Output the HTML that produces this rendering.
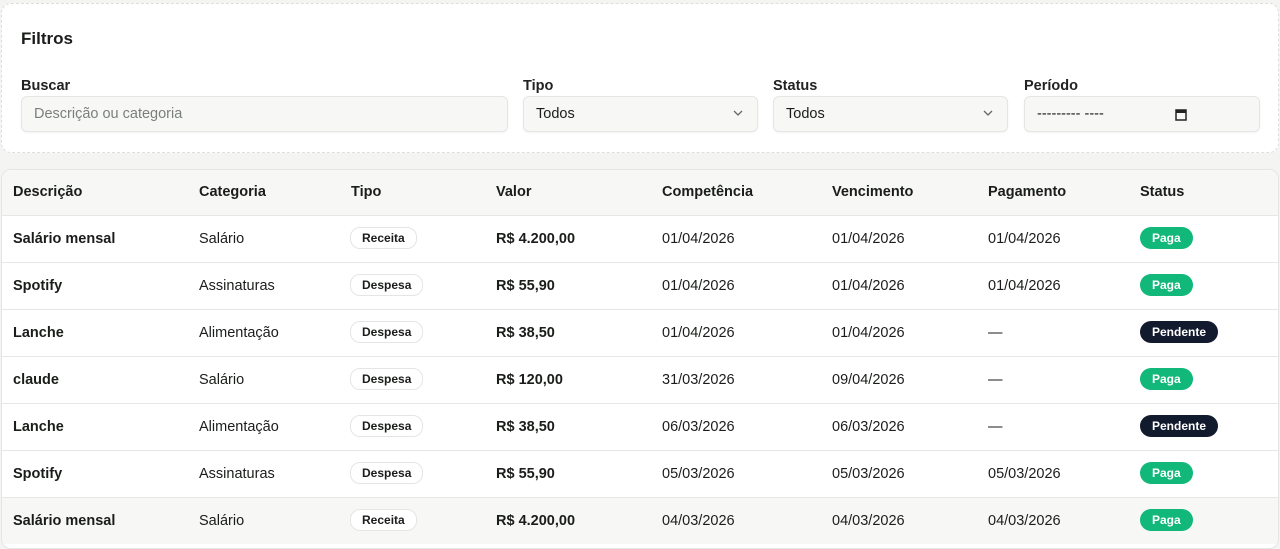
<!DOCTYPE html>
<html><head><meta charset="utf-8"><style>
*{box-sizing:border-box;margin:0;padding:0}
body{width:1280px;height:544px;background:#f4f5f3;font-family:"Liberation Sans",sans-serif;color:#1a1d1a;position:relative;overflow:hidden}
.card{position:absolute;left:1px;top:3px;width:1278px;height:150px;background:#fff;border:1px dashed #dcdfdb;border-radius:10px}
h2{position:absolute;left:19px;top:25px;font-size:17px;font-weight:bold}
.lbl{position:absolute;top:74px;font-size:14.5px;font-weight:bold;color:#222}
.inp{position:absolute;top:92px;height:36px;background:#f7f8f6;border:1px solid #e3e6e2;border-radius:6px;font-size:14.5px;padding:9px 12px;box-shadow:0 1px 2px rgba(0,0,0,.05)}
.inp svg{position:absolute;right:14px;top:13px}
.tbl{position:absolute;left:1px;top:169px;width:1278px;height:380px;background:#fff;border:1px solid #e3e6e2;border-radius:10px;overflow:hidden}
.row{position:absolute;left:0;width:100%;height:47px;border-top:1px solid #e6e8e5;font-size:14.5px}
.row span{position:absolute;top:15px}
.hd{top:0;height:45px;background:#f7f8f6;border-top:none;font-weight:bold}
.hd span{top:14px}
.b{font-weight:bold}
.pill{font-size:12px;font-weight:bold;border:1px solid #e3e6e2;border-radius:10px;padding:3px 11px;top:11px!important}
.st{font-size:12px;font-weight:bold;color:#fff;border-radius:11px;padding:4px 12px;top:11px!important}
.pg{background:#12b87a}.pd{background:#121a2e}
</style></head><body>
<div class="card">
<h2>Filtros</h2>
<div class="lbl" style="left:19px">Buscar</div>
<div class="inp" style="left:19px;width:487px;color:#7b7f7a">Descrição ou categoria</div>
<div class="lbl" style="left:521px">Tipo</div>
<div class="inp" style="left:521px;width:235px">Todos<svg width="10" height="6" viewBox="0 0 10 6"><path d="M1 1l4 4 4-4" fill="none" stroke="#666" stroke-width="1.3"/></svg></div>
<div class="lbl" style="left:771px">Status</div>
<div class="inp" style="left:771px;width:235px">Todos<svg width="10" height="6" viewBox="0 0 10 6"><path d="M1 1l4 4 4-4" fill="none" stroke="#666" stroke-width="1.3"/></svg></div>
<div class="lbl" style="left:1022px">Período</div>
<div class="inp" style="left:1022px;width:236px">--------- ----<svg style="right:72px;top:11px" width="12" height="13" viewBox="0 0 12 13"><rect x="1" y="2" width="10" height="10" fill="none" stroke="#222" stroke-width="1.5"/><rect x="1" y="2" width="10" height="3" fill="#222"/></svg></div>
</div>
<div class="tbl">
<div class="row hd"><span style="left:11px">Descrição</span><span style="left:197px">Categoria</span><span style="left:349px">Tipo</span><span style="left:494px">Valor</span><span style="left:660px">Competência</span><span style="left:830px">Vencimento</span><span style="left:986px">Pagamento</span><span style="left:1138px">Status</span></div>

<div class="row" style="top:45px"><span class="b" style="left:11px">Salário mensal</span><span style="left:197px">Salário</span><span class="pill" style="left:348px">Receita</span><span class="b" style="left:494px">R$ 4.200,00</span><span style="left:660px">01/04/2026</span><span style="left:830px">01/04/2026</span><span style="left:986px">01/04/2026</span><span class="st pg" style="left:1138px">Paga</span></div>
<div class="row" style="top:92px"><span class="b" style="left:11px">Spotify</span><span style="left:197px">Assinaturas</span><span class="pill" style="left:348px">Despesa</span><span class="b" style="left:494px">R$ 55,90</span><span style="left:660px">01/04/2026</span><span style="left:830px">01/04/2026</span><span style="left:986px">01/04/2026</span><span class="st pg" style="left:1138px">Paga</span></div>
<div class="row" style="top:139px"><span class="b" style="left:11px">Lanche</span><span style="left:197px">Alimentação</span><span class="pill" style="left:348px">Despesa</span><span class="b" style="left:494px">R$ 38,50</span><span style="left:660px">01/04/2026</span><span style="left:830px">01/04/2026</span><span style="left:986px">—</span><span class="st pd" style="left:1138px">Pendente</span></div>
<div class="row" style="top:186px"><span class="b" style="left:11px">claude</span><span style="left:197px">Salário</span><span class="pill" style="left:348px">Despesa</span><span class="b" style="left:494px">R$ 120,00</span><span style="left:660px">31/03/2026</span><span style="left:830px">09/04/2026</span><span style="left:986px">—</span><span class="st pg" style="left:1138px">Paga</span></div>
<div class="row" style="top:233px"><span class="b" style="left:11px">Lanche</span><span style="left:197px">Alimentação</span><span class="pill" style="left:348px">Despesa</span><span class="b" style="left:494px">R$ 38,50</span><span style="left:660px">06/03/2026</span><span style="left:830px">06/03/2026</span><span style="left:986px">—</span><span class="st pd" style="left:1138px">Pendente</span></div>
<div class="row" style="top:280px"><span class="b" style="left:11px">Spotify</span><span style="left:197px">Assinaturas</span><span class="pill" style="left:348px">Despesa</span><span class="b" style="left:494px">R$ 55,90</span><span style="left:660px">05/03/2026</span><span style="left:830px">05/03/2026</span><span style="left:986px">05/03/2026</span><span class="st pg" style="left:1138px">Paga</span></div>
<div class="row" style="top:327px;background:#f7f8f6"><span class="b" style="left:11px">Salário mensal</span><span style="left:197px">Salário</span><span class="pill" style="left:348px;background:#fff">Receita</span><span class="b" style="left:494px">R$ 4.200,00</span><span style="left:660px">04/03/2026</span><span style="left:830px">04/03/2026</span><span style="left:986px">04/03/2026</span><span class="st pg" style="left:1138px">Paga</span></div>
</div>
</body></html>
